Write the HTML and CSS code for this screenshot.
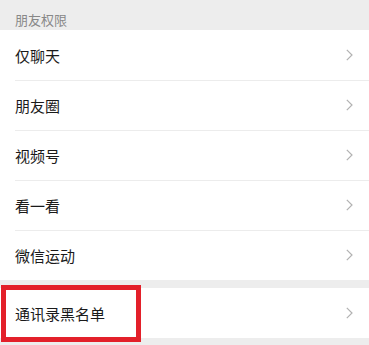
FILE: index.html
```html
<!DOCTYPE html>
<html lang="zh-CN">
<head>
<meta charset="utf-8">
<link rel="stylesheet" href="styles.css">
</head>
<body>
<div class="page">
  <div class="section-title">朋友权限</div>
  <div class="group">
    <div class="row"><span class="label">仅聊天</span><svg class="chev" width="7" height="12" viewBox="0 0 7 12"><path d="M0.8 0.8 L6 6 L0.8 11.2" fill="none" stroke="#b2b2b2" stroke-width="1.2"/></svg></div>
    <div class="row"><span class="label">朋友圈</span><svg class="chev" width="7" height="12" viewBox="0 0 7 12"><path d="M0.8 0.8 L6 6 L0.8 11.2" fill="none" stroke="#b2b2b2" stroke-width="1.2"/></svg></div>
    <div class="row"><span class="label">视频号</span><svg class="chev" width="7" height="12" viewBox="0 0 7 12"><path d="M0.8 0.8 L6 6 L0.8 11.2" fill="none" stroke="#b2b2b2" stroke-width="1.2"/></svg></div>
    <div class="row"><span class="label">看一看</span><svg class="chev" width="7" height="12" viewBox="0 0 7 12"><path d="M0.8 0.8 L6 6 L0.8 11.2" fill="none" stroke="#b2b2b2" stroke-width="1.2"/></svg></div>
    <div class="row"><span class="label">微信运动</span><svg class="chev" width="7" height="12" viewBox="0 0 7 12"><path d="M0.8 0.8 L6 6 L0.8 11.2" fill="none" stroke="#b2b2b2" stroke-width="1.2"/></svg></div>
  </div>
  <div class="group group-second">
    <div class="row"><span class="label">通讯录黑名单</span><svg class="chev" width="7" height="12" viewBox="0 0 7 12"><path d="M0.8 0.8 L6 6 L0.8 11.2" fill="none" stroke="#b2b2b2" stroke-width="1.2"/></svg></div>
    <div class="highlight"></div>
  </div>
</div>
</body>
</html>
```
FILE: styles.css
```css
html, body {
  margin: 0;
  padding: 0;
  background: #ededed;
}
body {
  font-family: "Noto Sans CJK SC", "Noto Sans", sans-serif;
  width: 369px;
  height: 345px;
  overflow: hidden;
}
.page {
  display: flex;
  flex-direction: column;
}
.section-title {
  height: 30px;
  box-sizing: border-box;
  padding: 8px 15px 0;
  display: flex;
  align-items: center;
  font-size: 13px;
  color: #888888;
}
.group {
  background: #ffffff;
  display: flex;
  flex-direction: column;
}
.group-second {
  margin-top: 8px;
  position: relative;
}
.row {
  height: 50px;
  display: flex;
  align-items: center;
  justify-content: space-between;
  padding: 0 16px 0 15px;
  position: relative;
  box-sizing: border-box;
}
.row + .row::before {
  content: "";
  position: absolute;
  left: 15px;
  right: 0;
  top: 0;
  height: 1px;
  background: #ececec;
}
.label {
  font-size: 15px;
  color: #1a1a1a;
  line-height: 20px;
  padding-top: 2px;
}
.chev {
  display: block;
}
.highlight {
  position: absolute;
  left: 1px;
  top: -3px;
  width: 140px;
  height: 57px;
  border: 5px solid #e3202a;
  box-sizing: border-box;
}
```
